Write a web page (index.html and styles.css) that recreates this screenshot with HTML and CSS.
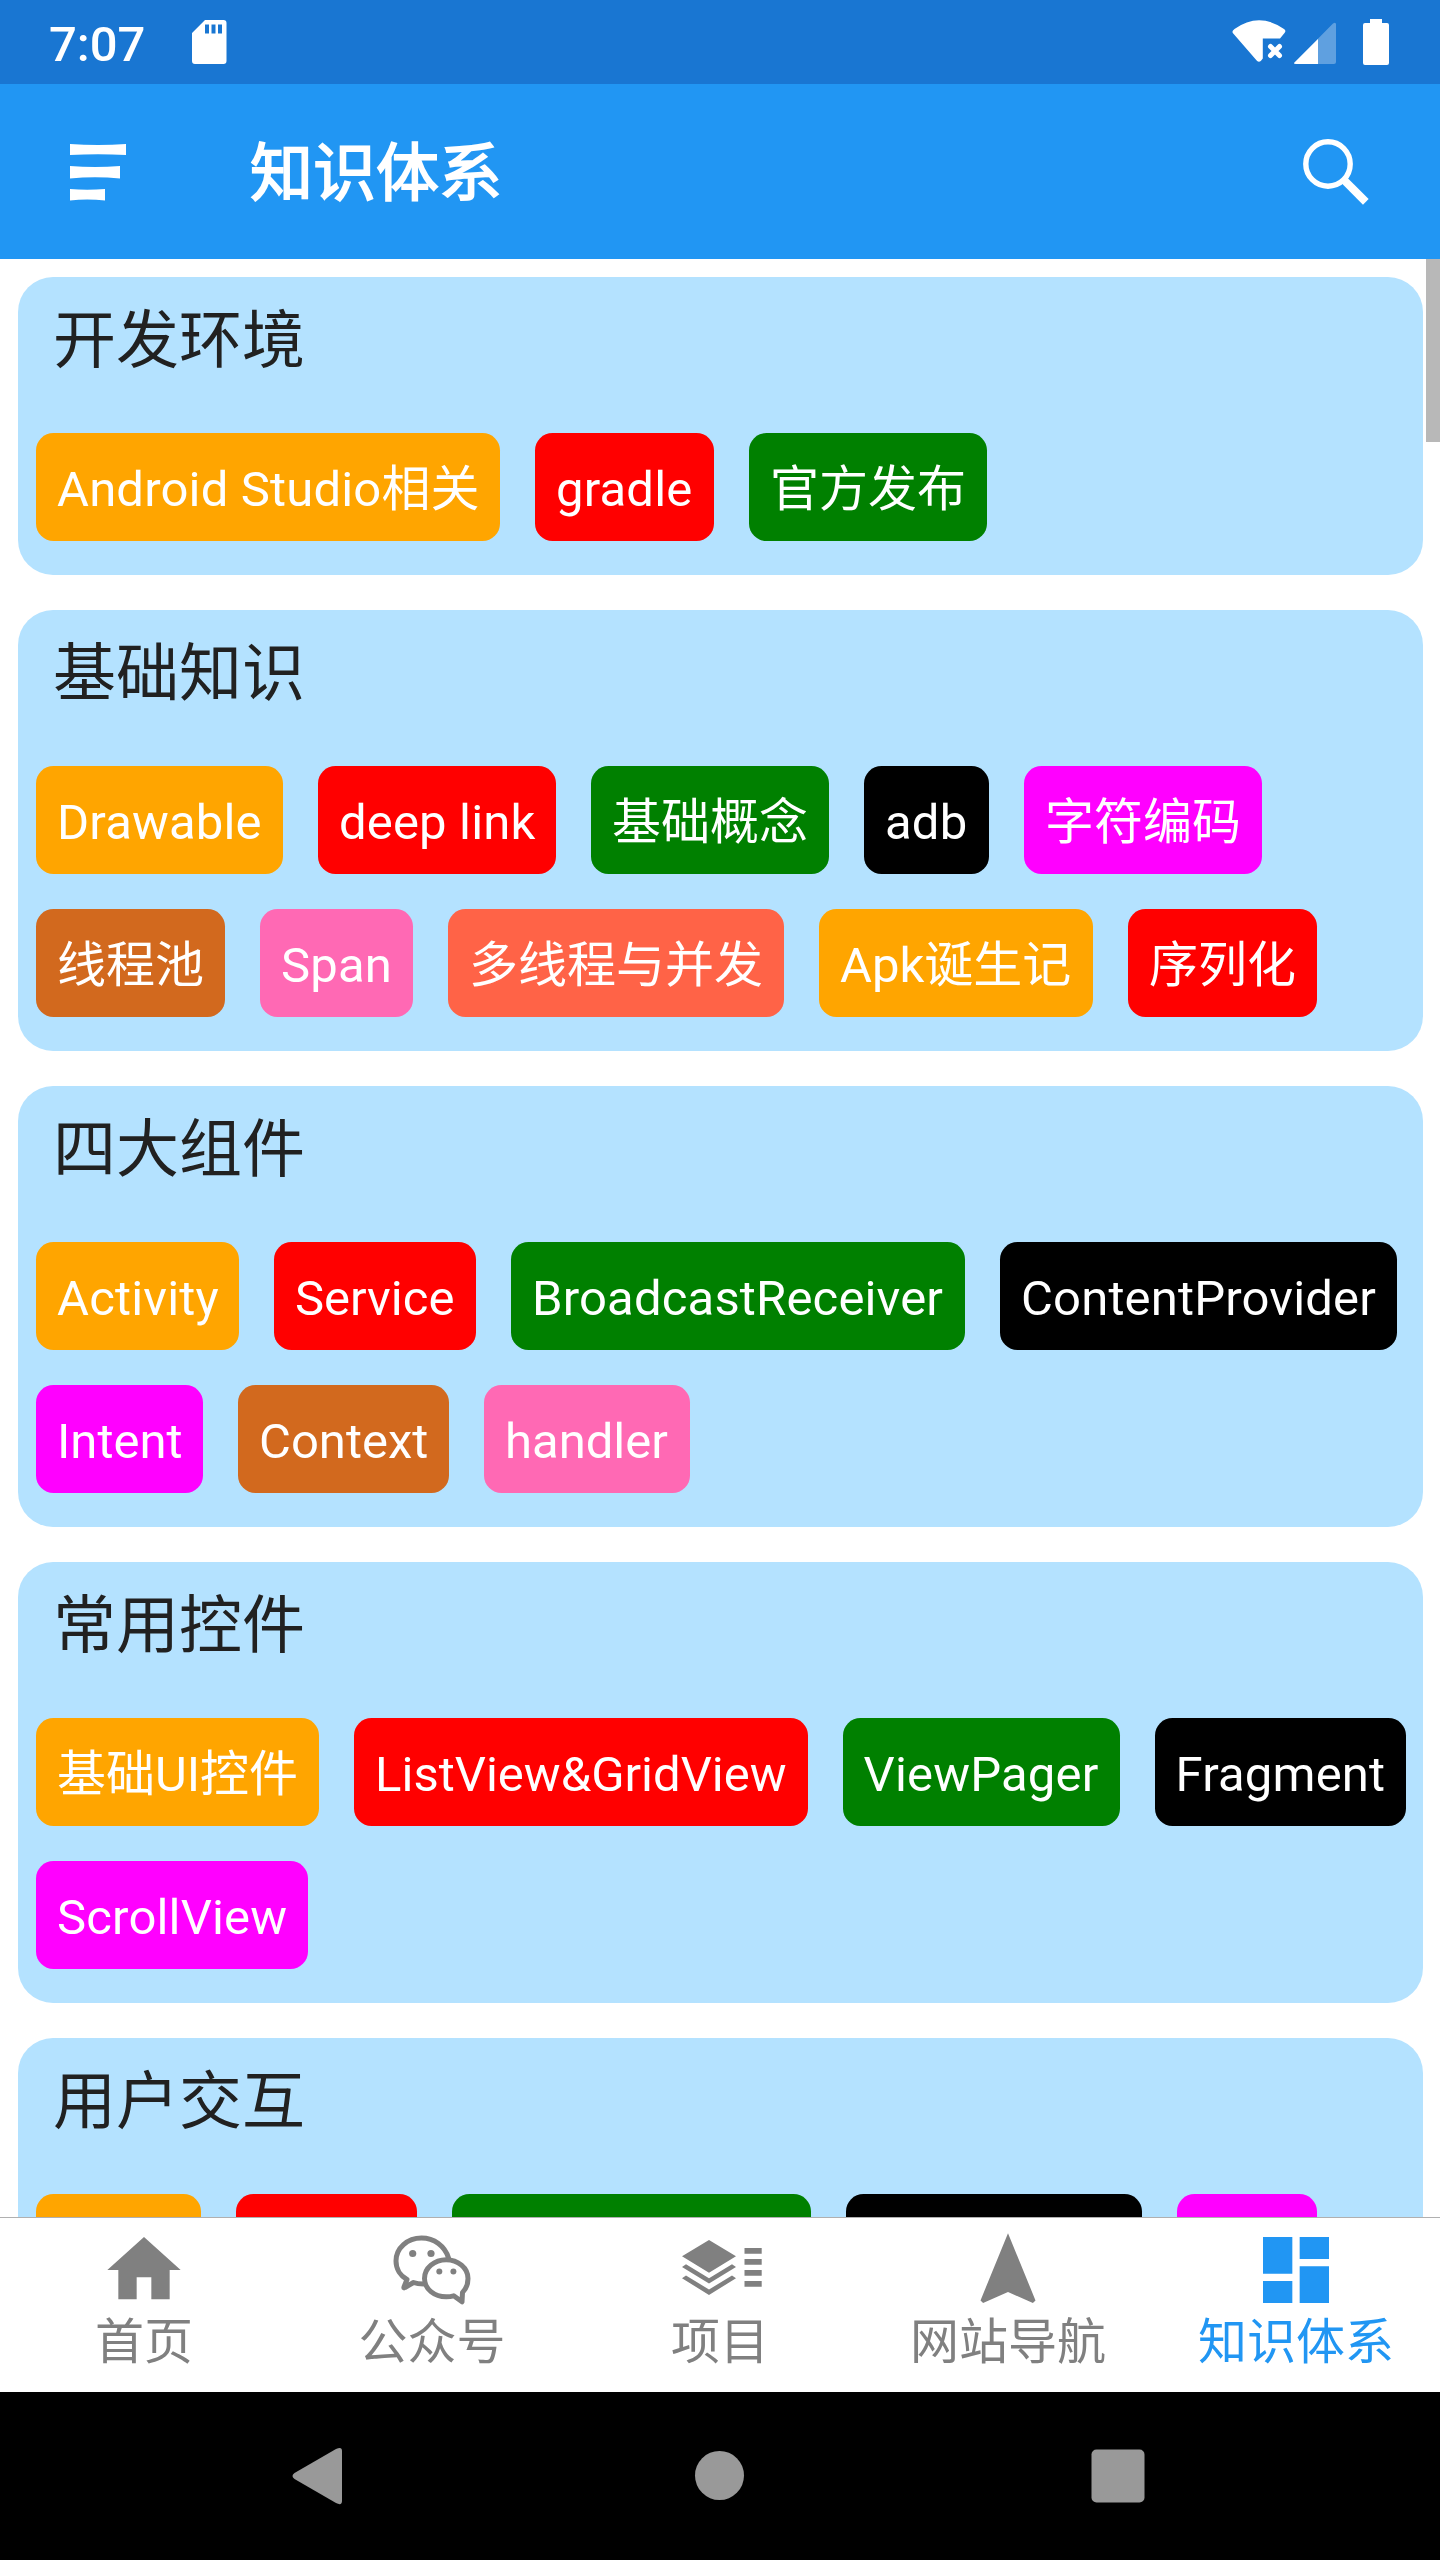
FILE: index.html
```html
<!DOCTYPE html>
<html lang="zh-CN">
<head>
<meta charset="utf-8">
<title>知识体系</title>
<link rel="stylesheet" href="styles.css">
</head>
<body>
<div class="screen">
  <div class="status-bar">
    <span class="clock">7:07</span>
    <svg class="sd" viewBox="0 0 36 46"><path fill-rule="evenodd" d="M14 1h18.500q3 0 3 3v38q0 3-3 3H4q-3 0-3-3V14zM14 5.500v9h4v-9zm6.500 0v9h4v-9zm6.500 0v9h4v-9z"/></svg>
    <svg class="signals" viewBox="0 0 160 48">
      <path d="M2.500 9Q27-8.500 52 9q2.500 1.800.500 4l-4.500 5.400H30.800V38.500l-2 2.500q-1.800 1.500-3.700 0L.800 13q-1.200-2 1.700-4z"/>
      <path class="cross" d="M38.500 26.500l9 9m0-9l-9 9"/>
      <path class="faint" d="M62.500 42.500L101 3.500q3-2 3 1V42q0 2-2 2H64q-3-.5-1.500-1.500z"/>
      <path d="M62.500 42.500L86 19v25H64q-3-.5-1.500-1.500z"/>
      <path d="M138-1h12v4h5q2 0 2 2v38q0 2-2 2h-22q-2 0-2-2V5q0-2 2-2h5z"/>
    </svg>
  </div>
  <header class="app-bar">
    <svg class="menu" viewBox="0 0 56 56"><path d="M0 0q28 2 56 0v11q-28-1.500-56 0zM0 22q25 2 50 0v12.500q-25-2.500-50 0zM0 45q17 1.500 35 0v11.500q-18-2-35 0z"/></svg>
    <h1 class="app-title">知识体系</h1>
    <svg class="search" viewBox="0 0 68 68"><circle cx="26" cy="26" r="22.200"/><path d="M42 42l21.800 21.800"/></svg>
  </header>
  <main class="content">
    <section class="card">
      <h2>开发环境</h2>
      <div class="chips"><span class="chip orange latin" style="width:464px">Android Studio相关</span><span class="chip red latin" style="width:179px">gradle</span><span class="chip green">官方发布</span></div>
    </section>
    <section class="card">
      <h2>基础知识</h2>
      <div class="chips"><span class="chip orange latin" style="width:247px">Drawable</span><span class="chip red latin" style="width:238px">deep link</span><span class="chip green">基础概念</span><span class="chip black latin" style="width:125px">adb</span><span class="chip magenta">字符编码</span><span class="chip brown">线程池</span><span class="chip pink latin" style="width:153px">Span</span><span class="chip tomato">多线程与并发</span><span class="chip orange" style="width:274px">Apk诞生记</span><span class="chip red">序列化</span></div>
    </section>
    <section class="card">
      <h2>四大组件</h2>
      <div class="chips"><span class="chip orange latin" style="width:203px">Activity</span><span class="chip red" style="width:202px">Service</span><span class="chip green latin" style="width:454px">BroadcastReceiver</span><span class="chip black latin" style="width:397px">ContentProvider</span><span class="chip magenta" style="width:167px">Intent</span><span class="chip brown" style="width:211px">Context</span><span class="chip pink" style="width:206px">handler</span></div>
    </section>
    <section class="card">
      <h2>常用控件</h2>
      <div class="chips"><span class="chip orange">基础UI控件</span><span class="chip red">ListView&amp;GridView</span><span class="chip green latin" style="width:277px">ViewPager</span><span class="chip black latin" style="width:251px">Fragment</span><span class="chip magenta latin" style="width:272px">ScrollView</span></div>
    </section>
    <section class="card">
      <h2>用户交互</h2>
      <div class="chips"><span class="chip orange" style="width:165px"></span><span class="chip red" style="width:181px"></span><span class="chip green" style="width:359px"></span><span class="chip black" style="width:296px"></span><span class="chip magenta" style="width:140px"></span></div>
    </section>
    <div class="scrollbar"></div>
  </main>
  <nav class="tabs">
    <div class="tab"><svg viewBox="0 0 24 24"><path d="M10 20v-6h4v6h5v-8h3L12 3 2 12h3v8z"/></svg><span>首页</span></div>
    <div class="tab"><svg viewBox="0 0 88 88">
      <path class="line" d="M60.500 32C57 20 46 12 33.500 12 19.500 12 8 22 8 35c0 8 4.500 15 11 18.500l-3 7.500q-.5 1.500 1 .5l8.500-5q4 1.500 10 1.500"/>
      <path class="line" d="M74.500 66.500C78 63 80 58 80 52.500 80 42 70 33.800 58.200 33.800S36.500 42 36.500 52.500s9.900 18.300 21.700 18.300q4 0 7.500-1l8.300 6z"/>
      <circle cx="24.700" cy="27.500" r="3.600"/><circle cx="43" cy="27.500" r="3.600"/><circle cx="51.300" cy="45.400" r="3"/><circle cx="65.400" cy="45.400" r="3"/>
    </svg><span>公众号</span></div>
    <div class="tab"><svg viewBox="0 0 88 88"><path d="M33 14l27 16.300-27 16.400L6 30.300zM10 38.300l23 14 23-14 4 2.700-27 16.400L6 41zM10 49.500l23 14 23-14 4 2.700L33 69 6 52.200zM68.500 22h17.200v5.700H68.500zm0 11h17.200v5.700H68.500zm0 11h17.200v5.700H68.500zm0 11h17.200v5.700H68.500z"/></svg><span>项目</span></div>
    <div class="tab"><svg viewBox="0 0 24 24"><path d="M12 2L4.500 20.290l.710.710L12 18l6.790 3 .710-.710z"/></svg><span>网站导航</span></div>
    <div class="tab active"><svg viewBox="0 0 24 24"><path d="M3 13h8V3H3zM3 21h8v-6H3zM13 21h8V11h-8zM13 3v6h8V3z"/></svg><span>知识体系</span></div>
  </nav>
  <div class="system-nav">
    <svg viewBox="0 0 60 60"><path d="M6.500 27L48 3q6-3 6 2v50q0 5-6 2L6.500 33q-4-3 0-6z"/></svg>
    <svg viewBox="0 0 60 60"><circle cx="31.500" cy="29.500" r="24.500"/></svg>
    <svg viewBox="0 0 60 60"><rect x="3.500" y="3.500" width="53" height="53" rx="5"/></svg>
  </div>
</div>
</body>
</html>
```
FILE: styles.css
```css
* { box-sizing: border-box; }
body {
  margin: 0;
  font-family: Roboto, "Noto Sans CJK SC", sans-serif;
}
h1, h2 { margin: 0; }
svg { display: block; flex: none; }
.screen {
  width: 1440px;
  height: 2560px;
  display: flex;
  flex-direction: column;
  overflow: hidden;
  background: #fff;
}
.status-bar {
  height: 84px;
  flex: none;
  display: flex;
  align-items: flex-start;
  padding: 0 48px 0 49px;
  background: #1976d2;
  color: #fff;
  fill: #fff;
}
.clock {
  width: 142px;
  padding-top: 5px;
  font-size: 49px;
  font-weight: 500;
  line-height: 79px;
}
.sd { width: 36px; height: 46px; margin-top: 19px; }
.signals {
  width: 160px;
  height: 48px;
  margin: 20px 0 0 auto;
  overflow: visible;
}
.cross { fill: none; stroke: #fff; stroke-width: 5; stroke-linecap: round; }
.faint { fill: #5fa0e0; }
.app-bar {
  height: 175px;
  flex: none;
  display: flex;
  align-items: center;
  padding: 0 70px;
  background: #2196f3;
  color: #fff;
}
.menu { width: 56px; height: 56px; fill: #fff; overflow: visible; }
.app-title {
  margin-left: 124px;
  padding-top: 4px;
  font-size: 63px;
  font-weight: 400;
  -webkit-text-stroke: 1.800px #fff;
  line-height: 171px;
}
.search {
  width: 68px;
  height: 68px;
  margin-left: auto;
  fill: none;
  stroke: #fff;
  stroke-width: 5.400;
}
.search path { stroke-width: 8; }
.content {
  height: 1958px;
  flex: none;
  position: relative;
  display: flex;
  flex-direction: column;
  gap: 35px;
  padding: 18px 17px 0 18px;
  overflow: hidden;
}
.card {
  flex: none;
  padding: 0 0 34px 18px;
  border-radius: 35px;
  background: #b4e2ff;
}
.card h2 {
  height: 156px;
  padding-left: 17px;
  color: #212121;
  font-size: 63px;
  font-weight: 400;
  line-height: 127px;
}
.chips { display: flex; flex-wrap: wrap; gap: 35px; }
.chip {
  height: 108px;
  padding: 5px 21px 0;
  border-radius: 17.500px;
  color: #fff;
  font-size: 49px;
  line-height: 104px;
  white-space: nowrap;
}
.latin { letter-spacing: .17px; }
.orange { background: #ffa500; }
.red { background: #f00; }
.green { background: #008000; }
.black { background: #000; }
.magenta { background: #f0f; }
.brown { background: #d2691e; }
.pink { background: #ff69b4; }
.tomato { background: #ff6347; }
.scrollbar {
  position: absolute;
  top: 0;
  right: 0;
  width: 14px;
  height: 183px;
  background: #b8b8b8;
}
.tabs {
  height: 175px;
  flex: none;
  display: grid;
  grid-template-columns: repeat(5, 1fr);
  border-top: 1px solid #b0b0b0;
}
.tab {
  display: flex;
  flex-direction: column;
  align-items: center;
  padding-top: 8px;
  color: #808080;
  fill: #808080;
  font-size: 49px;
  line-height: 58px;
}
.tab svg { width: 88px; height: 88px; }
.line { fill: none; stroke: #808080; stroke-width: 5; stroke-linejoin: round; stroke-linecap: round; }
.active { color: #2196f3; fill: #2196f3; }
.system-nav {
  flex: 1;
  display: flex;
  justify-content: space-between;
  align-items: center;
  padding: 0 292px 0 288px;
  background: #000;
  fill: #999;
}
.system-nav svg { width: 60px; height: 60px; }
```
